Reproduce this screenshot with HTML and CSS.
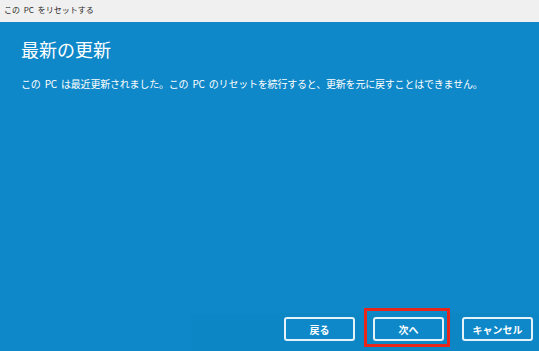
FILE: index.html
```html
<!DOCTYPE html>
<html lang="ja">
<head>
<meta charset="utf-8">
<title>この PC をリセットする</title>
<link rel="stylesheet" href="styles.css">
</head>
<body>
<div class="window">
  <div class="titlebar">この PC をリセットする</div>
  <div class="content">
    <h1 class="heading">最新の更新</h1>
    <p class="message">この PC は最近更新されました。この PC のリセットを続行すると、更新を元に戻すことはできません。</p>
    <div class="spacer"></div>
    <div class="footer">
      <button class="btn">戻る</button>
      <span class="focus-ring"><button class="btn">次へ</button></span>
      <button class="btn">キャンセル</button>
    </div>
  </div>
</div>
</body>
</html>
```
FILE: styles.css
```css
html, body {
  margin: 0;
  padding: 0;
  width: 539px;
  height: 351px;
  overflow: hidden;
  font-family: "Noto Sans CJK JP", "Noto Sans", sans-serif;
}
.window {
  display: flex;
  flex-direction: column;
  height: 351px;
}
.titlebar {
  height: 22px;
  background: #f0f0f0;
  color: #2a2a2a;
  font-size: 8px;
  line-height: 20px;
  padding-left: 4px;
  word-spacing: 2px;
  box-sizing: border-box;
}
.content {
  flex: 1;
  background: #0e88c8;
  display: flex;
  flex-direction: column;
  color: #ffffff;
}
.heading {
  margin: 14px 0 0 21px;
  font-size: 18px;
  font-weight: normal;
  line-height: 26px;
}
.message {
  margin: 15px 0 0 21px;
  font-size: 10px;
  line-height: 14px;
  letter-spacing: -0.2px;
  word-spacing: 2px;
}
.spacer {
  flex: 1;
}
.footer {
  display: flex;
  justify-content: flex-end;
  align-items: flex-start;
  gap: 18px;
  margin-left: 190px;
  padding: 4px 6px 10px 0;
  background: #0c86c5;
}
.focus-ring {
  position: relative;
  display: flex;
}
.focus-ring::after {
  content: "";
  position: absolute;
  left: -9px;
  top: -9px;
  right: -6px;
  bottom: -6px;
  border: 3px solid #e8261c;
  pointer-events: none;
}
.btn {
  width: 71px;
  height: 24px;
  box-sizing: border-box;
  border: 2px solid #e6f2fa;
  border-radius: 3px;
  background: #0e88c8;
  color: #ffffff;
  font-family: "Noto Sans CJK JP", "Noto Sans", sans-serif;
  font-size: 10px;
  font-weight: bold;
  padding: 0;
}
```
